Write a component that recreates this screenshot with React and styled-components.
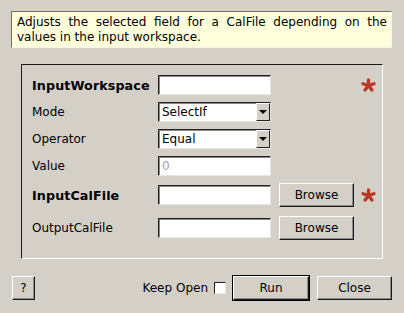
import styled, { createGlobalStyle } from 'styled-components';

const Global = createGlobalStyle`
  html, body { margin: 0; padding: 0; }
  body {
    background: #d4d0c8;
    font-family: "DejaVu Sans", "Liberation Sans", sans-serif;
    font-size: 12px;
    color: #000;
  }
`;

const Dialog = styled.div`
  width: 404px;
  height: 313px;
  box-sizing: border-box;
  padding: 11px 12px 0 11px;
  display: flex;
  flex-direction: column;
`;

const Hint = styled.div`
  height: 37px;
  box-sizing: border-box;
  padding: 3px 4px 0 5px;
  background: #ffffdc;
  border: 1px solid;
  border-color: #6e6e6e #f4f4ea #f4f4ea #6e6e6e;
  line-height: 15px;
`;

const HintLine = styled.span`
  display: block;
  text-align: ${p => (p.$justify ? 'justify' : 'left')};
  text-align-last: ${p => (p.$justify ? 'justify' : 'auto')};
`;

const Frame = styled.div`
  margin: 16px 9px 0 10px;
  height: 195px;
  box-sizing: border-box;
  border: 1px solid;
  border-color: #1a1a1a #fff #fff #1a1a1a;
  padding: 10px 0 0 10px;
  display: flex;
  flex-direction: column;
  gap: 7px;
`;

const Row = styled.div`
  display: grid;
  grid-template-columns: 126px 113px 8px 75px 6px 17px;
  align-items: center;
  height: ${p => p.$h || 20}px;
  margin-top: ${p => p.$mt || 0}px;
`;

const Label = styled.span`
  grid-column: 1;
  font-weight: ${p => (p.$bold ? 'bold' : 'normal')};
  font-size: ${p => (p.$bold ? '12.7px' : '12px')};
  letter-spacing: ${p => (p.$bold ? '0.1px' : '0')};
  white-space: nowrap;
`;

const Field = styled.div`
  grid-column: 2;
  height: 20px;
  box-sizing: border-box;
  background: #fff;
  border: 1px solid;
  border-color: #222 #e8e6e0 #e8e6e0 #222;
  box-shadow: inset 1px 1px 0 #888;
  display: flex;
  align-items: center;
  padding-left: 3px;
  color: ${p => (p.$disabled ? '#a4a4a4' : '#000')};
  position: relative;
`;

const DropButton = styled.div`
  position: absolute;
  right: 0;
  top: 0;
  bottom: 0;
  width: 14px;
  box-sizing: border-box;
  background: #d4d0c8;
  border: 1px solid;
  border-color: #fff #222 #222 #fff;
  display: flex;
  align-items: center;
  justify-content: center;
  &::after {
    content: '';
    border-left: 4px solid transparent;
    border-right: 4px solid transparent;
    border-top: 4px solid #000;
  }
`;

const Button = styled.div`
  grid-column: ${p => p.$col || 'auto'};
  width: ${p => p.$w}px;
  height: 24px;
  margin-left: ${p => p.$ml || 0}px;
  box-sizing: border-box;
  background: #d4d0c8;
  border: 1px solid;
  border-color: #fff #1a1a1a #1a1a1a #fff;
  box-shadow: inset -1px -1px 0 #8a8a8a;
  display: flex;
  align-items: center;
  justify-content: center;
  outline: ${p => (p.$default ? '1px solid #000' : 'none')};
`;

const Mark = styled.svg`
  grid-column: 6;
  width: 17px;
  height: 14px;
`;

const Footer = styled.div`
  margin-top: 17px;
  margin-left: 1px;
  display: flex;
  align-items: center;
`;

const Spacer = styled.div`
  flex: 1;
`;

const KeepLabel = styled.span`
  margin-right: 6px;
`;

const Check = styled.div`
  width: 12px;
  height: 12px;
  box-sizing: border-box;
  background: #fff;
  border: 1px solid;
  border-color: #222 #e8e6e0 #e8e6e0 #222;
  margin-right: 7px;
`;

const Required = () => (
  <Mark viewBox="0 0 17 14">
    <g stroke="#bb3726" strokeWidth="3.3" strokeLinecap="round" transform="translate(8.5 7.5)">
      {[-90, -18, 54, 126, 198].map(a => (
        <line
          key={a}
          x1="0"
          y1="0"
          x2={(5.8 * Math.cos((a * Math.PI) / 180)).toFixed(2)}
          y2={(5.6 * Math.sin((a * Math.PI) / 180)).toFixed(2)}
        />
      ))}
    </g>
  </Mark>
);

export default function App() {
  return (
    <>
      <Global />
      <Dialog>
        <Hint>
          <HintLine $justify>Adjusts the selected field for a CalFile depending on the</HintLine>
          <HintLine>values in the input workspace.</HintLine>
        </Hint>
        <Frame>
          <Row>
            <Label $bold>InputWorkspace</Label>
            <Field />
            <Required />
          </Row>
          <Row>
            <Label>Mode</Label>
            <Field>SelectIf<DropButton /></Field>
          </Row>
          <Row>
            <Label>Operator</Label>
            <Field>Equal<DropButton /></Field>
          </Row>
          <Row>
            <Label>Value</Label>
            <Field $disabled>0</Field>
          </Row>
          <Row $h={24}>
            <Label $bold>InputCalFile</Label>
            <Field />
            <Button $col={4} $w={75}>Browse</Button>
            <Required />
          </Row>
          <Row $h={24} $mt={2}>
            <Label>OutputCalFile</Label>
            <Field />
            <Button $col={4} $w={75}>Browse</Button>
          </Row>
        </Frame>
        <Footer>
          <Button $w={23}>?</Button>
          <Spacer />
          <KeepLabel>Keep Open</KeepLabel>
          <Check />
          <Button $w={76} $default>Run</Button>
          <Button $w={75} $ml={8}>Close</Button>
        </Footer>
      </Dialog>
    </>
  );
}
